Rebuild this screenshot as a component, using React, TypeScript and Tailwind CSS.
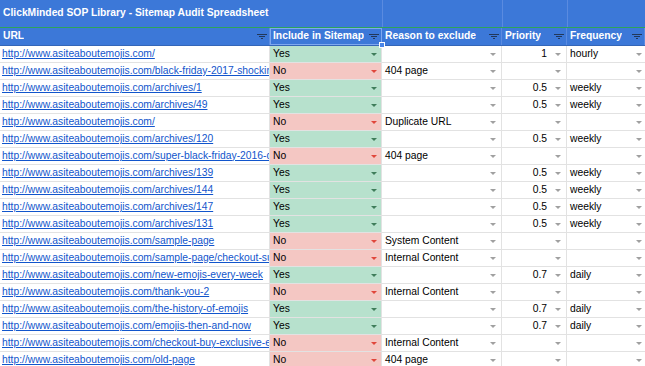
const rows: [string, boolean, string, string, string][] = [
  ["http://www.asiteaboutemojis.com/", true, "", "1", "hourly"],
  ["http://www.asiteaboutemojis.com/black-friday-2017-shocking-deals", false, "404 page", "", ""],
  ["http://www.asiteaboutemojis.com/archives/1", true, "", "0.5", "weekly"],
  ["http://www.asiteaboutemojis.com/archives/49", true, "", "0.5", "weekly"],
  ["http://www.asiteaboutemojis.com/", false, "Duplicate URL", "", ""],
  ["http://www.asiteaboutemojis.com/archives/120", true, "", "0.5", "weekly"],
  ["http://www.asiteaboutemojis.com/super-black-friday-2016-deals", false, "404 page", "", ""],
  ["http://www.asiteaboutemojis.com/archives/139", true, "", "0.5", "weekly"],
  ["http://www.asiteaboutemojis.com/archives/144", true, "", "0.5", "weekly"],
  ["http://www.asiteaboutemojis.com/archives/147", true, "", "0.5", "weekly"],
  ["http://www.asiteaboutemojis.com/archives/131", true, "", "0.5", "weekly"],
  ["http://www.asiteaboutemojis.com/sample-page", false, "System Content", "", ""],
  ["http://www.asiteaboutemojis.com/sample-page/checkout-success", false, "Internal Content", "", ""],
  ["http://www.asiteaboutemojis.com/new-emojis-every-week", true, "", "0.7", "daily"],
  ["http://www.asiteaboutemojis.com/thank-you-2", false, "Internal Content", "", ""],
  ["http://www.asiteaboutemojis.com/the-history-of-emojis", true, "", "0.7", "daily"],
  ["http://www.asiteaboutemojis.com/emojis-then-and-now", true, "", "0.7", "daily"],
  ["http://www.asiteaboutemojis.com/checkout-buy-exclusive-emojis", false, "Internal Content", "", ""],
  ["http://www.asiteaboutemojis.com/old-page", false, "404 page", "", ""],
];

const Arrow = ({ color }: { color: string }) => (
  <svg width="6" height="3" viewBox="0 0 6 3" className="shrink-0">
    <path d="M0 0h6L3 3z" fill={color} />
  </svg>
);

const Filter = () => (
  <svg width="10" height="5" viewBox="0 0 10 5" className="shrink-0">
    <rect x="0" y="0" width="10" height="1" fill="#22385a" />
    <rect x="2" y="2" width="6" height="1" fill="#22385a" />
    <rect x="4" y="4" width="2" height="1" fill="#22385a" />
  </svg>
);

const HeadCell = ({ label, selected }: { label: string; selected?: boolean }) => (
  <div
    className={`relative h-[17px] flex items-center justify-between pl-[3px] pr-[2px] border-r border-[#5a8be0] ${
      selected ? "outline outline-1 -outline-offset-1 outline-[#7ea8f0]" : ""
    }`}
  >
    <span className="font-bold text-white truncate">{label}</span>
    <Filter />
    {selected && (
      <div className="absolute right-[-4px] bottom-[-3px] w-[6px] h-[6px] bg-[#4a86e8] border border-white z-10" />
    )}
  </div>
);

const App = () => {
  return (
    <div
      className="w-[645px] h-[366px] overflow-hidden bg-white text-[10.3px] leading-none text-black"
      style={{ fontFamily: '"Liberation Sans", Arial, sans-serif' }}
    >
      {/* title row */}
      <div className="grid grid-cols-[382px_120px_65px_78px] h-[27px] bg-[#3c78d8]">
        <div className="flex items-center pl-[3px] font-bold text-white">
          ClickMinded SOP Library - Sitemap Audit Spreadsheet
        </div>
        <div className="border-l border-[#5a8be0]" />
        <div className="border-l border-[#5a8be0]" />
        <div className="border-l border-[#5a8be0]" />
      </div>
      <div className="h-px bg-[#2ea35a]" />

      <div className="grid grid-cols-[270px_112px_120px_65px_78px]">
        {/* header */}
        <div className="bg-[#3c78d8] border-b border-[#3466b8]">
          <HeadCell label="URL" />
        </div>
        <div className="bg-[#3c78d8] border-b border-[#3466b8]">
          <HeadCell label="Include in Sitemap" selected />
        </div>
        <div className="bg-[#3c78d8] border-b border-[#3466b8]">
          <HeadCell label="Reason to exclude" />
        </div>
        <div className="bg-[#3c78d8] border-b border-[#3466b8]">
          <HeadCell label="Priority" />
        </div>
        <div className="bg-[#3c78d8] border-b border-[#3466b8]">
          <HeadCell label="Frequency" />
        </div>

        {rows.map(([url, yes, reason, priority, freq], i) => (
          <div key={i} className="contents">
            <div className="h-[17px] flex items-center pl-[2px] border-r border-b border-[#e2e2e2] overflow-hidden whitespace-nowrap">
              <span className="text-[#1155cc] underline">{url}</span>
            </div>
            <div
              className={`h-[17px] flex items-center justify-between pl-[3px] pr-[4px] border-r border-b border-[#e2e2e2] ${
                yes ? "bg-[#b7e1cd]" : "bg-[#f4c7c3]"
              }`}
            >
              <span>{yes ? "Yes" : "No"}</span>
              <Arrow color={yes ? "#3f7d5a" : "#e0463b"} />
            </div>
            <div className="h-[17px] flex items-center justify-between pl-[3px] pr-[5px] border-r border-b border-[#e2e2e2]">
              <span>{reason}</span>
              <Arrow color="#a0a0a0" />
            </div>
            <div className="h-[17px] flex items-center justify-end gap-[8px] pr-[5px] border-r border-b border-[#e2e2e2]">
              <span>{priority}</span>
              <Arrow color="#a0a0a0" />
            </div>
            <div className="h-[17px] flex items-center justify-between pl-[3px] pr-[3px] border-b border-[#e2e2e2]">
              <span>{freq}</span>
              <Arrow color="#a0a0a0" />
            </div>
          </div>
        ))}
      </div>
    </div>
  );
};

export default App;
